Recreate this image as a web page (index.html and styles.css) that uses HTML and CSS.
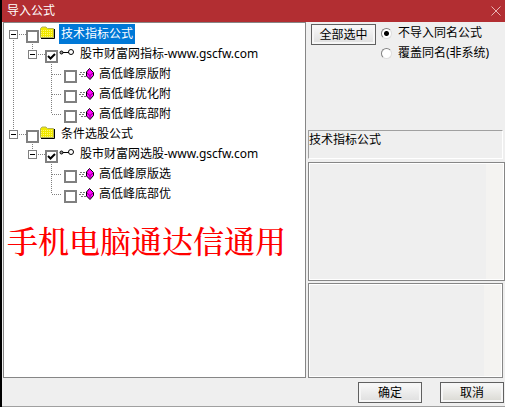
FILE: index.html
```html
<!DOCTYPE html>
<html lang="zh-CN">

<head>
    <meta charset="UTF-8">
    <meta name="viewport" content="width=device-width, initial-scale=1.0">
    <title>导入公式</title>
    <link rel="stylesheet" href="styles.css">
</head>

<body>
    <!-- 图标 -->
    <svg class="sprite" width="0" height="0">
        <symbol id="folder" viewBox="0 0 16 14">
            <path d="M0.500 2.500L2 1H6L7.500 2.500H13.500V11.500H0.500Z" fill="#f0e800" stroke="#b0b060"/>
            <path d="M1 4.500H13M1 6.500H13M1 8.500H13M1 10.500H13" stroke="#fff870" stroke-dasharray="1 1"/>
            <path d="M14.500 3V12.500H1" fill="none" stroke="#000"/>
        </symbol>
        <symbol id="key" viewBox="0 0 16 12">
            <path d="M3 5.500H10" stroke="#000" fill="none"/>
            <circle cx="2.500" cy="5.500" r="1.500" fill="#999" stroke="#000"/>
            <circle cx="12" cy="5" r="2.500" fill="#fff" stroke="#000"/>
        </symbol>
        <symbol id="gem" viewBox="0 0 16 14">
            <path d="M1 5.500H6M0 7.500H6M2 9.500H7" stroke="#777" stroke-dasharray="2 1"/>
            <path d="M10.500 1.500L14.500 5.500V8.500L11 12.500L7.500 9V5Z" fill="#f0f" stroke="#000"/>
            <path d="M8 6L11 8.500L14 6M11 8.500V12" fill="none" stroke="#800080"/>
        </symbol>
    </svg>

    <div class="dialog">
        <header class="title">
            <h1>导入公式</h1>
            <button class="close" type="button" aria-label="关闭">
                <svg width="10" height="10" viewBox="0 0 10 10"><path d="M0.500 0.500L9.500 9.500M9.500 0.500L0.500 9.500" stroke="#e8b4b4" fill="none"/></svg>
            </button>
        </header>

        <form class="content">
            <div class="tree">
                <ul class="root">
                    <li>
                        <div class="row">
                            <button class="toggle" type="button" aria-label="折叠"></button><i class="dots"></i>
                            <input type="checkbox" id="c1"><svg class="icon"><use href="#folder"/></svg>
                            <label class="active" for="c1">技术指标公式</label>
                        </div>
                        <ul>
                            <li>
                                <div class="row">
                                    <button class="toggle" type="button" aria-label="折叠"></button><i class="dots"></i>
                                    <input type="checkbox" id="c2" checked><svg class="icon"><use href="#key"/></svg>
                                    <label for="c2">股市财富网指标-www.gscfw.com</label>
                                </div>
                                <ul>
                                    <li>
                                        <div class="row">
                                            <i class="dots leaf"></i>
                                            <input type="checkbox" id="c3"><svg class="icon"><use href="#gem"/></svg>
                                            <label for="c3">高低峰原版附</label>
                                        </div>
                                    </li>
                                    <li>
                                        <div class="row">
                                            <i class="dots leaf"></i>
                                            <input type="checkbox" id="c4"><svg class="icon"><use href="#gem"/></svg>
                                            <label for="c4">高低峰优化附</label>
                                        </div>
                                    </li>
                                    <li>
                                        <div class="row">
                                            <i class="dots leaf"></i>
                                            <input type="checkbox" id="c5"><svg class="icon"><use href="#gem"/></svg>
                                            <label for="c5">高低峰底部附</label>
                                        </div>
                                    </li>
                                </ul>
                            </li>
                        </ul>
                    </li>
                    <li>
                        <div class="row">
                            <button class="toggle" type="button" aria-label="折叠"></button><i class="dots"></i>
                            <input type="checkbox" id="c6"><svg class="icon"><use href="#folder"/></svg>
                            <label for="c6">条件选股公式</label>
                        </div>
                        <ul>
                            <li>
                                <div class="row">
                                    <button class="toggle" type="button" aria-label="折叠"></button><i class="dots"></i>
                                    <input type="checkbox" id="c7" checked><svg class="icon"><use href="#key"/></svg>
                                    <label for="c7">股市财富网选股-www.gscfw.com</label>
                                </div>
                                <ul>
                                    <li>
                                        <div class="row">
                                            <i class="dots leaf"></i>
                                            <input type="checkbox" id="c8"><svg class="icon"><use href="#gem"/></svg>
                                            <label for="c8">高低峰原版选</label>
                                        </div>
                                    </li>
                                    <li>
                                        <div class="row">
                                            <i class="dots leaf"></i>
                                            <input type="checkbox" id="c9"><svg class="icon"><use href="#gem"/></svg>
                                            <label for="c9">高低峰底部优</label>
                                        </div>
                                    </li>
                                </ul>
                            </li>
                        </ul>
                    </li>
                </ul>
                <p class="notice">手机电脑通达信通用</p>
            </div>

            <div class="side">
                <div class="options">
                    <button class="btn" type="button">全部选中</button>
                    <div class="radios">
                        <div class="radio"><input type="radio" name="mode" id="skip" checked><label for="skip">不导入同名公式</label></div>
                        <div class="radio"><input type="radio" name="mode" id="cover"><label for="cover">覆盖同名(非系统)</label></div>
                    </div>
                </div>
                <div class="name">技术指标公式</div>
                <textarea class="box" readonly aria-label="公式说明"></textarea>
                <textarea class="box small" readonly aria-label="公式参数"></textarea>
            </div>
        </form>

        <footer class="bottom">
            <button class="btn" type="button">确定</button>
            <button class="btn cancel" type="button">取消</button>
        </footer>
    </div>
</body>

</html>
```
FILE: styles.css
```css
* {
    margin: 0;
    padding: 0;
    box-sizing: border-box;
}

body {
    background: #000;
    font: 12px/20px "Noto Sans", "Noto Sans CJK SC", sans-serif;
    color: #000;
}

.sprite {
    display: none;
}

.dialog {
    display: flex;
    flex-direction: column;
    min-height: 100vh;
    margin-left: 2px;
    background: #efefef;
    border-bottom: 1px solid #a0a0a0;
}

.title {
    display: flex;
    align-items: center;
    justify-content: space-between;
    height: 22px;
    padding: 0 4px 0 5px;
    background: #b22e32;
    color: #fff;
}

.title h1 {
    font-size: 12px;
    font-weight: normal;
}

.close {
    display: flex;
    border: 0;
    background: none;
}

.content {
    flex: 1;
    display: flex;
    gap: 2px;
    padding-left: 1px;
}

/* 左侧公式树 */
.tree {
    flex: 1;
    min-width: 0;
    padding: 1px 0 0 5px;
    background: #fff;
    border: 1px solid #868686;
}

.tree ul {
    list-style: none;
    padding-left: 19px;
}

.tree .root {
    padding-left: 0;
}

.tree li {
    background: repeating-linear-gradient(#808080 0 1px, transparent 1px 2px) 4px 0 / 1px 100% no-repeat;
}

.tree li:last-child {
    background-size: 1px 10px;
}

.root > li:first-child {
    background-position: 4px 10px;
}

.row {
    display: flex;
    align-items: center;
    height: 20px;
}

.toggle {
    width: 9px;
    height: 9px;
    border: 1px solid #808080;
    background: linear-gradient(#000, #000) center / 5px 1px no-repeat #fff;
}

.dots {
    width: 8px;
    height: 1px;
    background: repeating-linear-gradient(90deg, transparent 0 1px, #808080 1px 2px);
}

.dots.leaf {
    width: 11px;
    margin: 0 2px 0 4px;
}

.row input {
    appearance: none;
    align-self: flex-end;
    width: 13px;
    height: 13px;
    margin-bottom: 1px;
    border: 2px solid #808080;
    background: #fff;
}

.row input:checked {
    background: url("data:image/svg+xml,%3Csvg xmlns='http://www.w3.org/2000/svg' viewBox='0 0 9 9'%3E%3Cpath d='M1 4L3.500 6.500L8 2' fill='none' stroke='%23000' stroke-width='2'/%3E%3C/svg%3E") #fff;
}

.icon {
    width: 16px;
    height: 14px;
    margin: 0 3px 2px 1px;
}

.leaf ~ .icon {
    margin: 0 2px 0 2px;
}

.row label {
    padding: 0 2px;
    white-space: nowrap;
}

.row .active {
    background: #0078d7;
    color: #fff;
}

.notice {
    padding: 14px 0 0;
    margin-left: -2px;
    font: 500 31px/44px "Noto Serif CJK SC", "Noto Sans CJK SC", serif;
    color: #f00;
    white-space: nowrap;
}

/* 右侧选项 */
.side {
    flex: 0 0 197px;
    display: flex;
    flex-direction: column;
}

.options {
    display: flex;
    align-items: flex-start;
    gap: 5px;
    padding: 1px 0 0 3px;
    min-height: 108px;
}

.btn {
    width: 64px;
    height: 21px;
    border: 1px solid #606060;
    background: linear-gradient(#fafafa, #dedede);
    box-shadow: inset 0 0 0 2px #f6f6f6;
    font: inherit;
    line-height: 18px;
    white-space: nowrap;
}

.options .btn {
    flex: none;
    width: 65px;
    margin-top: 1px;
}

.radio {
    display: flex;
    align-items: center;
    gap: 6px;
    height: 20px;
    white-space: nowrap;
}

.radio input {
    appearance: none;
    width: 11px;
    height: 11px;
    border: 1px solid #808080;
    border-right-color: #ddd;
    border-bottom-color: #ddd;
    border-radius: 50%;
    background: #fff;
}

.radio input:checked {
    background: radial-gradient(#000 2px, #fff 3px);
}

.name {
    height: 29px;
    margin: 0 2px 3px 0;
    border: 1px solid #a0a0a0;
    border-right-color: #fff;
    border-bottom-color: #fff;
    line-height: 18px;
}

/* 右边留出滚动条的位置 */
.box {
    display: block;
    flex: 119;
    width: 100%;
    min-height: 0;
    margin-bottom: 2px;
    resize: none;
    border: 1px solid #868686;
    background: linear-gradient(#f4f3f1, #f4f3f1) right / 18px 100% no-repeat #efefef;
    box-shadow: inset 0 0 0 1px #fff;
}

.box.small {
    flex: 95;
    width: auto;
    margin: 0 2px 0 0;
}

/* 底部按钮 */
.bottom {
    display: flex;
    justify-content: flex-end;
    gap: 18px;
    padding: 4px 1px 3px 0;
}

.cancel {
    background: linear-gradient(#fafafa, #d9d8d2);
}
```
